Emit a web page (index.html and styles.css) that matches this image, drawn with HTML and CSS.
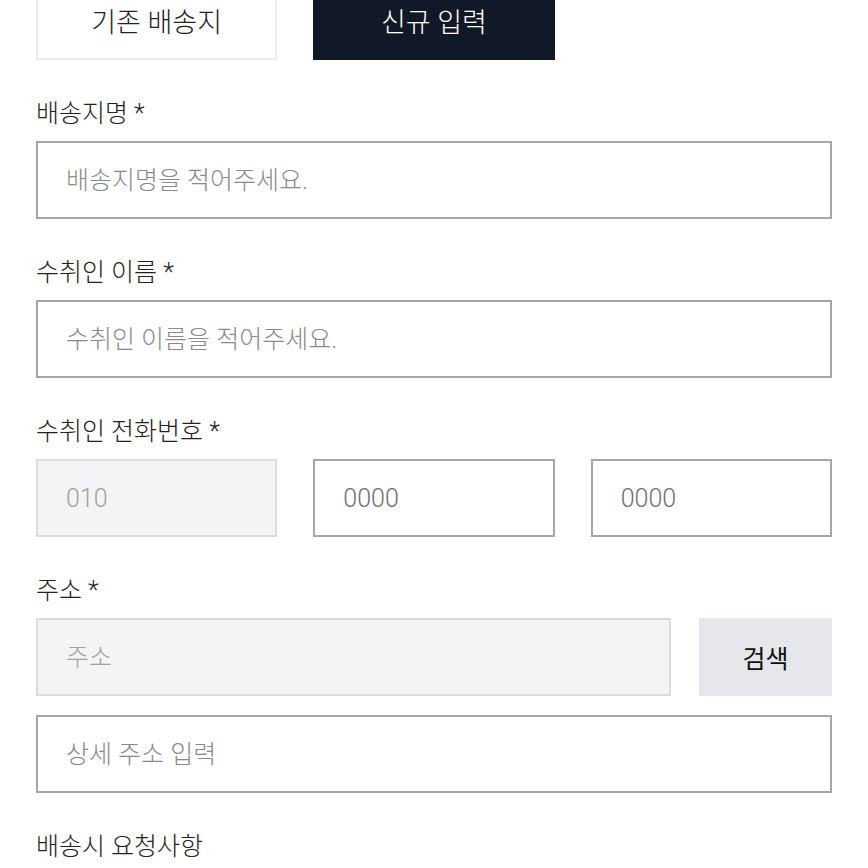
FILE: index.html
```html
<!DOCTYPE html>
<html lang="ko">
<head>
<meta charset="utf-8">
<link rel="stylesheet" href="styles.css">
</head>
<body>
<div class="page">
  <div class="tabs">
    <button class="tab">기존 배송지</button>
    <button class="tab tab-active">신규 입력</button>
  </div>

  <div class="field">
    <div class="label">배송지명 *</div>
    <input class="input" placeholder="배송지명을 적어주세요.">
  </div>

  <div class="field">
    <div class="label">수취인 이름 *</div>
    <input class="input" placeholder="수취인 이름을 적어주세요.">
  </div>

  <div class="field">
    <div class="label">수취인 전화번호 *</div>
    <div class="phone">
      <input class="input input-disabled" placeholder="010" disabled>
      <input class="input input-num" placeholder="0000">
      <input class="input input-num" placeholder="0000">
    </div>
  </div>

  <div class="field">
    <div class="label">주소 *</div>
    <div class="addr">
      <input class="input input-disabled" placeholder="주소" disabled>
      <button class="search">검색</button>
    </div>
    <input class="input detail" placeholder="상세 주소 입력">
  </div>

  <div class="field">
    <div class="label">배송시 요청사항</div>
  </div>
</div>
</body>
</html>
```

FILE: styles.css
```css
* { box-sizing: border-box; }
html, body { margin: 0; padding: 0; background: #fff; }
body {
  font-family: Roboto, "Noto Sans CJK KR", "Noto Sans", sans-serif;
  font-weight: 300;
  color: #222;
  overflow: hidden;
}
.page { padding: 0 36px; }
.tabs {
  display: grid;
  grid-template-columns: repeat(3, 1fr);
  column-gap: 36px;
  margin-top: -20px;
}
.tab {
  height: 80px;
  font-family: inherit;
  font-weight: 300;
  font-size: 27px;
  color: #222;
  background: #fff;
  border: 2px solid #ececec;
  padding: 0;
}
.tab-active {
  background: #111827;
  border-color: #111827;
  color: #fff;
}
.field { margin-top: 40px; }
.label {
  font-size: 25px;
  line-height: 28px;
  color: #222;
  margin-bottom: 13px;
}
.input {
  display: block;
  width: 100%;
  height: 78px;
  border: 2px solid #a6a6a6;
  background: #fff;
  padding: 0 28px;
  font-family: inherit;
  font-weight: 300;
  font-size: 25px;
  color: #222;
  outline: none;
}
.input::placeholder { color: #8a8a8a; }
.input-num::placeholder { color: #6f6f6f; }
.input-disabled {
  background: #f3f4f6;
  border-color: #dcdcdc;
}
.input-disabled::placeholder { color: #a2a2a2; }
.phone {
  display: grid;
  grid-template-columns: repeat(3, 1fr);
  column-gap: 36px;
}
.addr {
  display: grid;
  grid-template-columns: 1fr 133px;
  column-gap: 28px;
}
.search {
  height: 78px;
  border: none;
  background: #e5e7eb;
  font-family: inherit;
  font-weight: 400;
  font-size: 25px;
  color: #111;
  padding: 0;
}
.detail { margin-top: 19px; }
```
